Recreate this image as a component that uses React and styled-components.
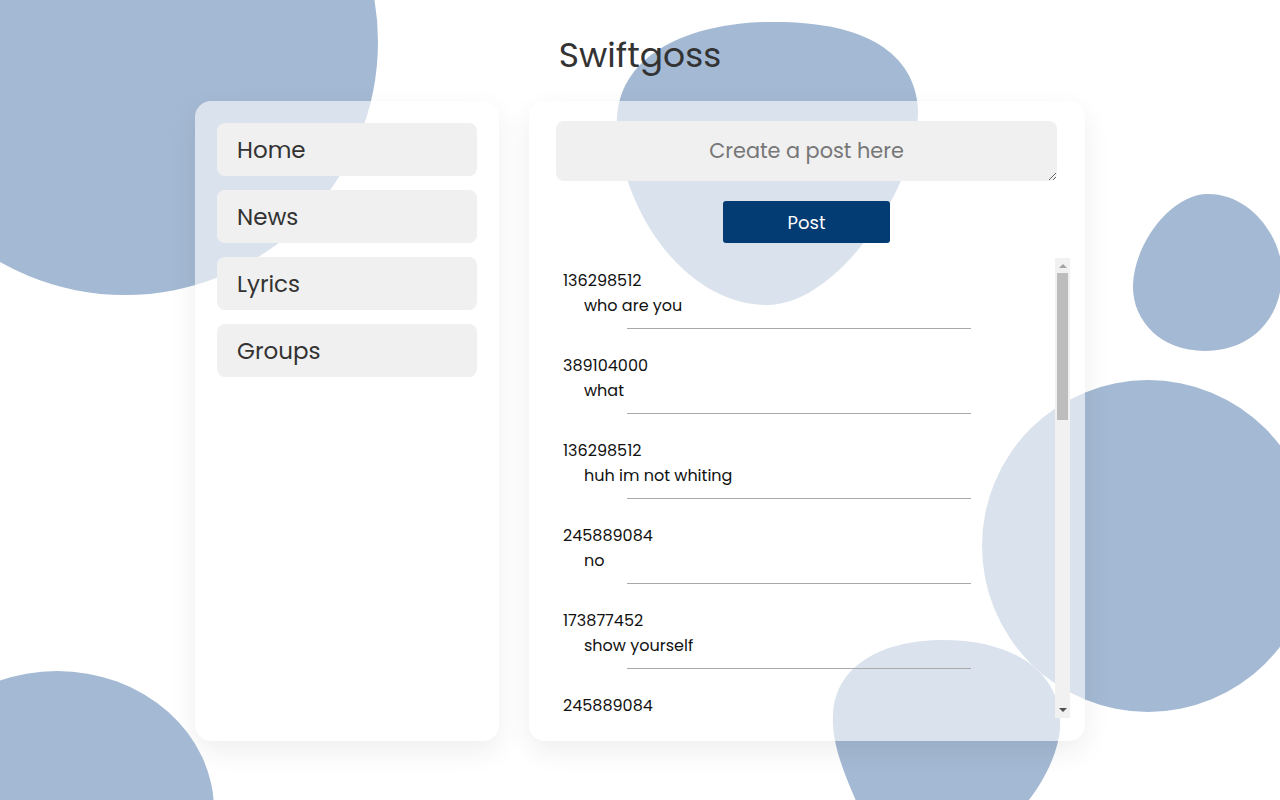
import React from "react";
import styled, { createGlobalStyle } from "styled-components";

const posts = [
  { id: "136298512", text: "who are you" },
  { id: "389104000", text: "what" },
  { id: "136298512", text: "huh im not whiting" },
  { id: "245889084", text: "no" },
  { id: "173877452", text: "show yourself" },
  { id: "245889084", text: "" },
];

const App = () => {
  return (
    <Page>
      <GlobalStyle />
      <Backdrop viewBox="0 0 1280 800" $z={0}>
        <circle cx="125" cy="42" r="253" />
        <path d="M 767 22 C 860 20, 915 50, 918 110 C 920 180, 840 305, 767 305 C 690 305, 625 220, 617 130 C 612 60, 680 24, 767 22 Z" />
        <path d="M 1208 194 C 1250 194, 1280 235, 1282 270 C 1283 320, 1250 351, 1205 351 C 1160 351, 1132 320, 1133 285 C 1134 245, 1170 194, 1208 194 Z" />
        <circle cx="1148" cy="546" r="166" />
        <path d="M 943 640 C 1012 640, 1058 670, 1060 720 C 1062 750, 1040 790, 1020 810 L 860 810 C 847 780, 831 745, 833 715 C 835 665, 883 640, 943 640 Z" />
      </Backdrop>
      <Backdrop viewBox="0 0 1280 800" $z={2}>
        <ellipse cx="57" cy="810" rx="157" ry="139" />
      </Backdrop>

      <Title>Swiftgoss</Title>
      <Layout>
        <Sidebar>
          <NavItem>Home</NavItem>
          <NavItem>News</NavItem>
          <NavItem>Lyrics</NavItem>
          <NavItem>Groups</NavItem>
        </Sidebar>
        <Main>
          <PostInput placeholder="Create a post here" />
          <PostButton>Post</PostButton>
          <FeedBox>
            <Feed>
              {posts.map((p, i) => (
                <Entry key={i}>
                  <UserId>{p.id}</UserId>
                  {p.text && <Message>{p.text}</Message>}
                  {p.text && <Divider />}
                </Entry>
              ))}
            </Feed>
            <ScrollTrack>
              <ScrollArrow $up $dim />
              <ScrollThumb />
              <ScrollArrow />
            </ScrollTrack>
          </FeedBox>
        </Main>
      </Layout>
    </Page>
  );
};

export default App;

const GlobalStyle = createGlobalStyle`
  body {
    margin: 0;
    background: #ffffff;
    font-family: "Poppins", "Open Sans", "Noto Sans", sans-serif;
    overflow: hidden;
  }
`;

const Page = styled.div`
  position: relative;
  height: 100vh;
  width: 100vw;
  overflow: hidden;
`;

const Backdrop = styled.svg`
  position: absolute;
  top: 0;
  left: 0;
  width: 1280px;
  height: 800px;
  fill: #a4b9d3;
  z-index: ${(props) => props.$z};
  pointer-events: none;
`;

const Title = styled.h1`
  position: relative;
  z-index: 1;
  margin: 0;
  padding-top: 33px;
  height: 101px;
  box-sizing: border-box;
  text-align: center;
  font-size: 34.5px;
  line-height: 44px;
  font-weight: 400;
  color: #333333;
`;

const Layout = styled.div`
  position: relative;
  z-index: 1;
  display: flex;
  justify-content: center;
  gap: 30px;
`;

const Panel = styled.div`
  height: 640px;
  box-sizing: border-box;
  background: rgba(255, 255, 255, 0.6);
  border-radius: 16px;
  box-shadow: 0 10px 28px rgba(0, 0, 0, 0.07);
`;

const Sidebar = styled(Panel)`
  width: 304px;
  padding: 22px;
  display: flex;
  flex-direction: column;
  gap: 14px;
`;

const NavItem = styled.div`
  height: 53px;
  display: flex;
  align-items: center;
  padding-left: 20px;
  background: #f0f0f0;
  border-radius: 8px;
  font-size: 23px;
  color: #333333;
`;

const Main = styled(Panel)`
  width: 556px;
  padding: 20px 15px 0 27px;
  display: flex;
  flex-direction: column;
  align-items: flex-start;
`;

const PostInput = styled.textarea`
  width: 501px;
  height: 60px;
  box-sizing: border-box;
  border: none;
  border-radius: 8px;
  background: #f0f0f0;
  padding: 15px 12px;
  font-family: inherit;
  font-size: 20.8px;
  line-height: 30px;
  text-align: center;
  color: #333333;
  outline: none;
  &::placeholder {
    color: #777777;
  }
`;

const PostButton = styled.button`
  margin: 20px 0 0 167px;
  width: 167px;
  height: 42px;
  border: none;
  border-radius: 3px;
  background: #033c73;
  color: #ffffff;
  font-family: inherit;
  font-size: 18px;
`;

const FeedBox = styled.div`
  margin-top: 15px;
  width: 514px;
  height: 460px;
  display: flex;
`;

const Feed = styled.div`
  flex: 1;
  box-sizing: border-box;
  padding: 10px 0 0 7px;
  overflow: hidden;
`;

const ScrollTrack = styled.div`
  width: 15px;
  height: 100%;
  background: #f1f1f1;
  display: flex;
  flex-direction: column;
  align-items: center;
`;

const ScrollArrow = styled.div`
  width: 0;
  height: 0;
  margin: ${(props) => (props.$up ? "6px 0 4px" : "auto 0 6px")};
  border-left: 4px solid transparent;
  border-right: 4px solid transparent;
  ${(props) =>
    props.$up
      ? `border-bottom: 4px solid ${props.$dim ? "#a3a3a3" : "#505050"};`
      : `border-top: 4px solid #505050;`}
`;

const ScrollThumb = styled.div`
  width: 11px;
  height: 147px;
  margin-top: 1px;
  background: #bdbdbd;
`;

const Entry = styled.div`
  padding-bottom: 24px;
`;

const UserId = styled.div`
  font-size: 16px;
  line-height: 25px;
  color: #111111;
`;

const Message = styled.div`
  padding-left: 21px;
  font-size: 16px;
  line-height: 25px;
  color: #111111;
`;

const Divider = styled.div`
  margin: 10px 0 0 64px;
  width: 344px;
  height: 1px;
  background: #aaaaaa;
`;
